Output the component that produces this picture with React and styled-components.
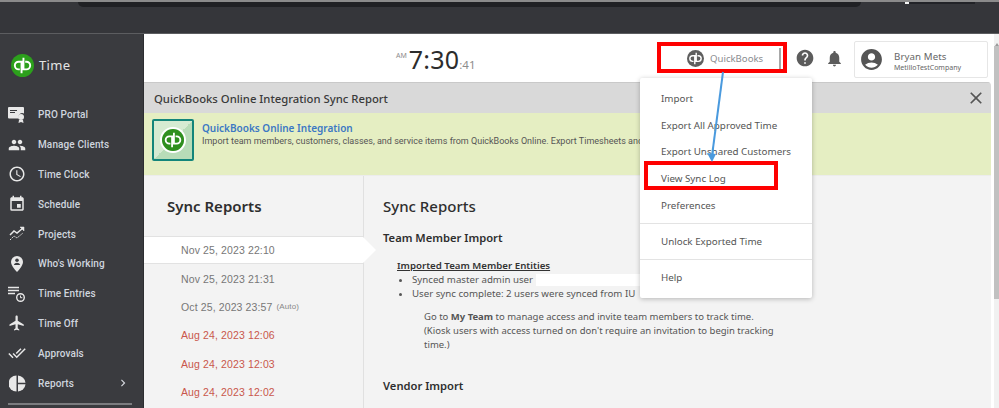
import React from 'react';
import styled, { createGlobalStyle } from 'styled-components';
import {
  MdPeople, MdAccessTime, MdEvent, MdFlight, MdDoneAll,
  MdChevronRight, MdHelp, MdNotifications, MdAccountCircle, MdClose,
} from 'react-icons/md';

const GlobalStyle = createGlobalStyle`
  html, body {
    margin: 0;
    padding: 0;
    overflow: hidden;
    background: #fff;
  }
  body {
    font-family: "Noto Sans", "Open Sans", sans-serif;
  }
`;

const Page = styled.div`
  position: relative;
  width: 999px;
  height: 408px;
  overflow: hidden;
  display: flex;
  flex-direction: column;
`;

const BrowserBar = styled.div`
  height: 34px;
  flex: none;
  box-sizing: border-box;
  background: #35363a;
  border-top: 2px solid #8b8b8b;
  border-bottom: 1px solid #5c5d60;
  padding-left: 78px;
  display: flex;
  align-items: flex-start;
`;

const AddressStrip = styled.div`
  width: 783px;
  height: 5px;
  background: #202124;
  border-radius: 0 0 6px 6px;
`;

const ProfileStrip = styled.div`
  width: 66px;
  height: 2px;
  margin-left: 44px;
  background: #222327;
  border-left: 4px solid #f4f4f4;
`;

const Body = styled.div`
  flex: 1;
  display: flex;
  min-height: 0;
`;

const Sidebar = styled.nav`
  width: 144px;
  flex: none;
  box-sizing: border-box;
  background: #3a3b3f;
  border-right: 1px solid #2c2d30;
  padding: 19px 0 0 8px;
`;

const Brand = styled.div`
  display: flex;
  align-items: center;
  gap: 5px;
  margin: 0 0 23px 3px;
  height: 24px;
  color: #e4e4e4;
  font-size: 13px;
  letter-spacing: 0.3px;
`;

const NavList = styled.div`
  display: flex;
  flex-direction: column;
`;

const NavItem = styled.div`
  height: 29.8px;
  display: flex;
  align-items: center;
  color: #cfd5de;
  font-size: 10px;
  font-weight: 500;
  font-family: Roboto, sans-serif;
  letter-spacing: 0.12px;
`;

const NavIcon = styled.span`
  width: 18px;
  height: 18px;
  margin-right: 12px;
  display: flex;
  align-items: center;
  justify-content: center;
  color: #e8e8e8;
  font-size: 18px;
`;

const NavArrow = styled.span`
  margin-left: auto;
  margin-right: 13px;
  display: flex;
  color: #d5d8de;
  font-size: 14px;
`;

const NavRule = styled.div`
  height: 2px;
  width: 124px;
  margin-top: 5px;
  background: #7b7c7f;
`;

const Main = styled.main`
  flex: 1;
  min-width: 0;
  display: flex;
  flex-direction: column;
`;

const TopBar = styled.header`
  height: 48px;
  flex: none;
  display: flex;
  align-items: center;
  background: #fff;
`;

const Clock = styled.div`
  width: 513px;
  flex: none;
  box-sizing: border-box;
  padding: 2px 0 0 252px;
  display: flex;
  align-items: baseline;
  color: #2c2c2c;
  font-family: "Noto Sans", sans-serif;
`;

const ClockSmall = styled.span`
  color: #8c8c8c;
  font-size: ${(p) => p.$size}px;
  position: relative;
  top: ${(p) => p.$top}px;
`;

const ClockBig = styled.span`
  font-size: 25px;
  letter-spacing: 0.2px;
  margin-left: 2px;
`;

const SyncButton = styled.div`
  width: 124px;
  height: 21px;
  flex: none;
  display: flex;
  align-items: center;
  gap: 6px;
  padding-left: 30px;
  box-sizing: border-box;
  color: #8a8c8f;
  font-size: 9.6px;
  border-right: 2px solid #a8a8a8;
`;

const TopIcon = styled.span`
  display: flex;
  margin-left: ${(p) => p.$left}px;
  color: #5c5c5c;
  font-size: ${(p) => p.$size}px;
`;

const UserCard = styled.div`
  width: 134px;
  height: 37px;
  margin: 3px 0 0 10px;
  flex: none;
  box-sizing: border-box;
  border: 1px solid #e6e6e6;
  border-radius: 2px;
  display: flex;
  align-items: center;
  padding-left: 4px;
  gap: 10px;
`;

const UserAvatar = styled.span`
  display: flex;
  color: #555;
  font-size: 25px;
`;

const UserText = styled.div`
  display: flex;
  flex-direction: column;
  gap: 0;
  padding-top: 3px;
`;

const UserName = styled.span`
  color: #666;
  font-size: 9.7px;
  letter-spacing: 0.1px;
  line-height: 13px;
`;

const UserCompany = styled.span`
  color: #666;
  font-size: 7px;
  line-height: 10px;
`;

const Panel = styled.section`
  flex: 1;
  min-height: 0;
  margin-right: 8px;
  background: #f3f3f3;
  border-top-right-radius: 4px;
  overflow: hidden;
  display: flex;
  flex-direction: column;
`;

const PanelHead = styled.div`
  height: 31px;
  flex: none;
  box-sizing: border-box;
  padding: 0 5px 0 10px;
  background: #d9d9d9;
  border-top: 1px solid #c9c9c9;
  display: flex;
  align-items: center;
  justify-content: space-between;
  color: #3a3a3a;
  font-size: 11.3px;
  font-weight: 500;
`;

const CloseIcon = styled.span`
  display: flex;
  color: #555;
  font-size: 20px;
`;

const Banner = styled.div`
  height: 63px;
  flex: none;
  box-sizing: border-box;
  padding: 6px 8px;
  background: #e5eec2;
  display: flex;
  gap: 8px;
  border-bottom: 1px solid #ececec;
`;

const BannerLogo = styled.div`
  width: 42px;
  height: 42px;
  flex: none;
  box-sizing: border-box;
  border: 2px solid #13857a;
  background: linear-gradient(135deg, #d6ebd2 50%, #b8dcb8 50%);
  display: flex;
  align-items: center;
  justify-content: center;
  border-radius: 2px;
`;

const BannerLogoRing = styled.span`
  display: flex;
  border: 2px solid #fff;
  border-radius: 50%;
`;

const BannerText = styled.div`
  padding-top: 1px;
  white-space: nowrap;
`;

const BannerTitle = styled.div`
  color: #3c78c4;
  font-size: 10px;
  font-weight: 600;
  line-height: 16px;
`;

const BannerCopy = styled.div`
  color: #555;
  font-family: Roboto, sans-serif;
  font-size: 9px;
  line-height: 11px;
`;

const Columns = styled.div`
  flex: 1;
  min-height: 0;
  display: flex;
`;

const ReportList = styled.div`
  width: 220px;
  flex: none;
  box-sizing: border-box;
  padding-top: 20px;
  border-right: 1px solid #e0e0e0;
`;

const ListTitle = styled.h2`
  margin: 0 0 20px 23px;
  color: #2e2e2e;
  font-size: 15px;
  font-weight: 600;
  line-height: 20px;
`;

const ReportRow = styled.div`
  position: relative;
  height: 28.4px;
  display: flex;
  align-items: center;
  gap: 4px;
  padding-left: 37px;
  box-sizing: border-box;
  font-family: "Liberation Sans", Arial, sans-serif;
  font-size: 10.5px;
  letter-spacing: 0.12px;
  color: ${(p) => (p.$failed ? '#c9574c' : '#777')};
  background: ${(p) => (p.$active ? '#fff' : 'transparent')};
  border-top: 1px solid ${(p) => (p.$active ? '#e2e2e2' : 'transparent')};
  border-bottom: 1px solid ${(p) => (p.$active ? '#e2e2e2' : 'transparent')};
  ${(p) => p.$active && `
    &::after {
      content: '';
      position: absolute;
      right: -13px;
      top: 0;
      width: 0;
      height: 0;
      border-top: 13.2px solid transparent;
      border-bottom: 13.2px solid transparent;
      border-left: 13px solid #fff;
    }
  `}
`;

const AutoTag = styled.span`
  font-size: 8px;
  color: #888;
`;

const Details = styled.div`
  flex: 1;
  min-width: 0;
  padding: 20px 0 0 19px;
  color: #555;
`;

const DetailTitle = styled.h2`
  margin: 0 0 14px;
  color: #2e2e2e;
  font-size: 15px;
  font-weight: 500;
  line-height: 20px;
`;

const SectionTitle = styled.h3`
  margin: 0 0 13px;
  color: #2e2e2e;
  font-size: 11.2px;
  font-weight: 600;
  line-height: 16px;
`;

const EntityBlock = styled.div`
  padding-left: 14px;
  font-size: 9.7px;
  line-height: 14px;
`;

const EntityTitle = styled.div`
  color: #333;
  font-weight: 600;
  text-decoration: underline;
`;

const EntityList = styled.ul`
  margin: 0;
  padding: 0 0 0 15px;
  white-space: nowrap;
`;

const Note = styled.p`
  width: 372px;
  margin: 9px 0 26px 41px;
  font-size: 9.5px;
  line-height: 14px;
`;

const Masked = styled.span`
  display: inline-block;
  width: 110px;
  height: 12px;
  margin-left: 3px;
  vertical-align: middle;
  background: #fff;
`;

const Dropdown = styled.div`
  position: absolute;
  left: 640px;
  top: 78px;
  width: 172px;
  height: 220px;
  box-sizing: border-box;
  background: #fff;
  border-radius: 2px;
  box-shadow: 0 1px 5px rgba(0, 0, 0, 0.25);
  color: #555;
  font-size: 9.8px;
  padding-top: 7px;
`;

const MenuItem = styled.div`
  height: 26.8px;
  display: flex;
  align-items: center;
  padding-left: 21px;
`;

const MenuRule = styled.div`
  height: 1px;
  margin: ${(p) => p.$gap}px 0;
  background: #e3e3e3;
`;

const RedBox = styled.div`
  position: absolute;
  box-sizing: border-box;
  left: ${(p) => p.$x}px;
  top: ${(p) => p.$y}px;
  width: ${(p) => p.$w}px;
  height: ${(p) => p.$h}px;
  border: ${(p) => p.$b}px solid #fe0000;
`;

const Arrow = styled.svg`
  position: absolute;
  left: 701px;
  top: 68px;
`;

const Scrollbar = styled.div`
  position: absolute;
  right: 0;
  top: 34px;
  width: 5px;
  height: 374px;
  background: #f1f1f1;
`;

const ScrollButton = styled.div`
  height: 12px;
  box-sizing: border-box;
  padding-top: 6px;
  display: flex;
  justify-content: center;
  &::before {
    content: '';
    border-left: 2.5px solid transparent;
    border-right: 2.5px solid transparent;
    border-bottom: 3px solid #9a9a9a;
  }
`;

const ScrollThumb = styled.div`
  height: 253px;
  background: #c1c1c1;
`;

const QbMark = ({ size, bg, fg = '#fff' }) => (
  <svg width={size} height={size} viewBox="0 0 24 24">
    <circle cx="12" cy="12" r="12" fill={bg} />
    <path
      d="M11 20V8H8a4 4 0 0 0 0 8h1.200M13 4v12h3a4 4 0 0 0 0-8h-1.200"
      fill="none"
      stroke={fg}
      strokeWidth="2"
    />
  </svg>
);

const ProPortalIcon = () => (
  <svg width="18" height="18" viewBox="0 0 18 18" fill="#e8e8e8">
    <path d="M1 1h14a1 1 0 0 1 1 1v5.500a4 4 0 0 0-5.500 5H1a1 1 0 0 1-1-1V2a1 1 0 0 1 1-1z" />
    <path d="M2 4h7v1H2zM2 6h5v1H2z" fill="#3a3b3f" />
    <circle cx="13" cy="11" r="3" />
    <path d="M11 14l-.5 3 2.500-1 2.500 1-.5-3z" />
  </svg>
);

const ProjectsIcon = () => (
  <svg width="18" height="18" viewBox="0 0 18 18" fill="none" stroke="#e8e8e8">
    <path d="M2 10l4-4 3 2 6-5" strokeWidth="1.500" />
    <path d="M12 2h4v4z" fill="#e8e8e8" strokeWidth="0.500" />
    <path d="M2 15l4-4 3 2 6-5" strokeWidth="1" strokeDasharray="1.500 1" />
  </svg>
);

const WorkingIcon = () => (
  <svg width="18" height="18" viewBox="0 0 18 18">
    <path d="M9 1a6 6 0 0 1 6 6c0 4-6 10-6 10S3 11 3 7a6 6 0 0 1 6-6z" fill="#e8e8e8" />
    <circle cx="9" cy="5.200" r="1.800" fill="#3a3b3f" />
    <path d="M5.800 10c.6-1.600 1.800-2.300 3.200-2.300s2.600.7 3.200 2.300z" fill="#3a3b3f" />
  </svg>
);

const EntriesIcon = () => (
  <svg width="18" height="18" viewBox="0 0 18 18" fill="none" stroke="#e8e8e8">
    <path d="M0 2.500h11M0 5.500h11M0 8.500h7" strokeWidth="1.400" />
    <circle cx="12.500" cy="12.500" r="3.800" strokeWidth="1.400" />
    <path d="M12.500 10.500v2.200h1.800" strokeWidth="1" />
  </svg>
);

const ReportsIcon = () => (
  <svg width="17" height="17" viewBox="0 0 17 17" fill="#e8e8e8">
    <path d="M7.500 0.500v16a8 8 0 0 1 0-16z" />
    <path d="M9 0.500a8 8 0 0 1 7.500 7.200H9z" />
    <path d="M9 9.300h7.500A8 8 0 0 1 9 16.500z" />
  </svg>
);

const navItems = [
  ['PRO Portal', <ProPortalIcon />],
  ['Manage Clients', <MdPeople />],
  ['Time Clock', <MdAccessTime />],
  ['Schedule', <MdEvent />],
  ['Projects', <ProjectsIcon />],
  ["Who's Working", <WorkingIcon />],
  ['Time Entries', <EntriesIcon />],
  ['Time Off', <MdFlight />],
  ['Approvals', <MdDoneAll />],
  ['Reports', <ReportsIcon />],
];

const reports = [
  { date: 'Nov 25, 2023 22:10', active: true },
  { date: 'Nov 25, 2023 21:31' },
  { date: 'Oct 25, 2023 23:57', auto: true },
  { date: 'Aug 24, 2023 12:06', failed: true },
  { date: 'Aug 24, 2023 12:03', failed: true },
  { date: 'Aug 24, 2023 12:02', failed: true },
];

const App = () => (
  <Page>
    <GlobalStyle />
    <BrowserBar>
      <AddressStrip />
      <ProfileStrip />
    </BrowserBar>
    <Body>
      <Sidebar>
        <Brand>
          <QbMark size={23} bg="#2ca01c" />
          Time
        </Brand>
        <NavList>
          {navItems.map(([label, icon]) => (
            <NavItem key={label}>
              <NavIcon>{icon}</NavIcon>
              {label}
              {label === 'Reports' && (
                <NavArrow>
                  <MdChevronRight />
                </NavArrow>
              )}
            </NavItem>
          ))}
        </NavList>
        <NavRule />
      </Sidebar>
      <Main>
        <TopBar>
          <Clock>
            <ClockSmall $size={7} $top={-11}>AM</ClockSmall>
            <ClockBig>7:30</ClockBig>
            <ClockSmall $size={11.5} $top={0}>:41</ClockSmall>
          </Clock>
          <SyncButton>
            <QbMark size={17} bg="#5f5f5f" />
            QuickBooks
          </SyncButton>
          <TopIcon $left={14} $size={20}><MdHelp /></TopIcon>
          <TopIcon $left={10} $size={19}><MdNotifications /></TopIcon>
          <UserCard>
            <UserAvatar><MdAccountCircle /></UserAvatar>
            <UserText>
              <UserName>Bryan Mets</UserName>
              <UserCompany>MetilloTestCompany</UserCompany>
            </UserText>
          </UserCard>
        </TopBar>
        <Panel>
          <PanelHead>
            QuickBooks Online Integration Sync Report
            <CloseIcon><MdClose /></CloseIcon>
          </PanelHead>
          <Banner>
            <BannerLogo>
              <BannerLogoRing>
                <QbMark size={22} bg="#2f8f1f" />
              </BannerLogoRing>
            </BannerLogo>
            <BannerText>
              <BannerTitle>QuickBooks Online Integration</BannerTitle>
              <BannerCopy>
                Import team members, customers, classes, and service items from QuickBooks Online. Export Timesheets and
              </BannerCopy>
            </BannerText>
          </Banner>
          <Columns>
            <ReportList>
              <ListTitle>Sync Reports</ListTitle>
              {reports.map((r) => (
                <ReportRow key={r.date} $active={r.active} $failed={r.failed}>
                  {r.date}
                  {r.auto && <AutoTag>(Auto)</AutoTag>}
                </ReportRow>
              ))}
            </ReportList>
            <Details>
              <DetailTitle>Sync Reports</DetailTitle>
              <SectionTitle>Team Member Import</SectionTitle>
              <EntityBlock>
                <EntityTitle>Imported Team Member Entities</EntityTitle>
                <EntityList>
                  <li>Synced master admin user<Masked /></li>
                  <li>User sync complete: 2 users were synced from IU</li>
                </EntityList>
              </EntityBlock>
              <Note>
                Go to <b>My Team</b> to manage access and invite team members to track time.
                <br />
                (Kiosk users with access turned on don't require an invitation to begin tracking time.)
              </Note>
              <SectionTitle>Vendor Import</SectionTitle>
            </Details>
          </Columns>
        </Panel>
      </Main>
    </Body>
    <Scrollbar>
      <ScrollButton />
      <ScrollThumb />
    </Scrollbar>
    <Dropdown>
      <MenuItem>Import</MenuItem>
      <MenuItem>Export All Approved Time</MenuItem>
      <MenuItem>Export Unshared Customers</MenuItem>
      <MenuItem>View Sync Log</MenuItem>
      <MenuItem>Preferences</MenuItem>
      <MenuRule $gap={4} />
      <MenuItem>Unlock Exported Time</MenuItem>
      <MenuRule $gap={4} />
      <MenuItem>Help</MenuItem>
    </Dropdown>
    <RedBox $x={657} $y={42} $w={130} $h={31} $b={4} />
    <RedBox $x={644} $y={161} $w={134} $h={29} $b={4} />
    <Arrow width="30" height="96" viewBox="0 0 30 96">
      <path d="M22 4L11 88" stroke="#4a9ade" strokeWidth="2" fill="none" />
      <path d="M6 85l5 9 4-8z" fill="#4a9ade" />
    </Arrow>
  </Page>
);

export default App;
